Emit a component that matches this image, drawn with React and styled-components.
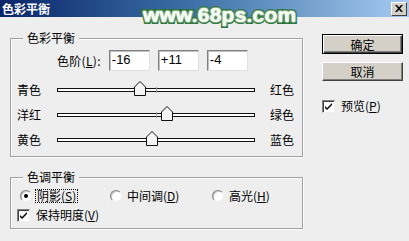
import React from "react";
import styled, { createGlobalStyle } from "styled-components";

const GlobalStyle = createGlobalStyle`
  html, body {
    margin: 0;
    padding: 0;
    background: #eeeeee;
  }
  body {
    font-family: "Noto Sans CJK SC", "Liberation Sans", sans-serif;
    font-size: 12px;
    color: #000;
  }
`;

const Dialog = styled.div`
  position: relative;
  width: 409px;
  height: 241px;
  background: #eeeeee;
  overflow: hidden;
`;

const TitleBar = styled.div`
  height: 17px;
  display: flex;
  align-items: center;
  justify-content: space-between;
  padding: 0 2px 0 2px;
  background: linear-gradient(to right, #0a246a 0%, #3a6ea5 45%, #a6caf0 100%);
`;

const Title = styled.span`
  color: #fff;
  font-weight: bold;
  font-size: 12px;
  line-height: 14px;
`;

const CloseBtn = styled.div`
  width: 14px;
  height: 12px;
  background: #d4d0c8;
  border: 1px solid;
  border-color: #fff #404040 #404040 #fff;
  display: flex;
  align-items: center;
  justify-content: center;
`;

const Watermark = styled.div`
  position: absolute;
  left: 143px;
  top: 3px;
  font-family: "Liberation Sans", Arial, sans-serif;
  font-weight: bold;
  font-size: 21px;
  letter-spacing: 0.2px;
  color: #f4fbef;
  -webkit-text-stroke: 4px #256f35;
  paint-order: stroke fill;
  text-shadow: 0 0 2px #ffffff, 0 0 2px #ffffff;
  pointer-events: none;
`;

const Body = styled.div`
  display: flex;
  align-items: flex-start;
  padding: 0 0 0 10px;
`;

const LeftCol = styled.div`
  width: 293px;
  flex-shrink: 0;
  display: flex;
  flex-direction: column;
  gap: 20px;
  padding-top: 21px;
`;

const RightCol = styled.div`
  margin-left: 19px;
  padding-top: 17px;
  width: 81px;
  display: flex;
  flex-direction: column;
`;

const Group = styled.div`
  position: relative;
  box-sizing: border-box;
  height: ${(p) => p.$h}px;
  border: 1px solid #a0a0a0;
  box-shadow: inset 1px 1px 0 #fff, 1px 1px 0 #fff;
  padding: ${(p) => p.$pad};
  display: flex;
  flex-direction: column;
`;

const Legend = styled.span`
  position: absolute;
  left: 12px;
  top: -7px;
  padding: 0 4px;
  background: #eeeeee;
  line-height: 12px;
`;

const LevelRow = styled.div`
  display: flex;
  align-items: center;
  height: 20px;
  margin-left: 46px;
  margin-bottom: 10px;
`;

const LevelLabel = styled.span`
  margin-right: 8px;
  letter-spacing: 0.3px;
`;

const Field = styled.div`
  box-sizing: border-box;
  width: 41px;
  height: 21px;
  margin-right: 8px;
  background: #fff;
  border: 1px solid;
  border-color: #808080 #e0e0e0 #e0e0e0 #808080;
  box-shadow: inset 1px 1px 0 #c0c0c0;
  font-family: "Liberation Sans", Arial, sans-serif;
  font-size: 13px;
  line-height: 18px;
  padding-left: 2px;
`;

const SliderRow = styled.div`
  display: flex;
  align-items: center;
  height: 20px;
  margin-bottom: 5px;
  padding-left: 6px;
`;

const SideLabel = styled.span`
  width: ${(p) => p.$w}px;
  flex-shrink: 0;
  line-height: 12px;
`;

const Track = styled.div`
  position: relative;
  flex-shrink: 0;
  width: 196px;
  height: 2px;
  background: #fff;
  border: 1px solid #111;
  margin-right: 15px;
`;

const Tick = styled.div`
  position: absolute;
  left: 98px;
  top: -2px;
  width: 1px;
  height: 6px;
  background: #9a9a9a;
`;

const Thumb = styled.svg`
  position: absolute;
  top: -8px;
  margin-left: -6px;
`;

const OptionRow = styled.div`
  display: flex;
  align-items: center;
  height: 14px;
`;

const Option = styled.label`
  display: flex;
  align-items: center;
  width: ${(p) => p.$w}px;
  flex-shrink: 0;
`;

const Radio = styled.span`
  box-sizing: border-box;
  width: 12px;
  height: 12px;
  border-radius: 50%;
  background: #fff;
  border: 1px solid;
  border-color: #808080 #f0f0f0 #f0f0f0 #808080;
  box-shadow: inset 1px 1px 0 #c8c8c8;
  display: flex;
  align-items: center;
  justify-content: center;
  margin-right: 4px;
  flex-shrink: 0;

  &::after {
    content: "";
    width: 4px;
    height: 4px;
    border-radius: 50%;
    background: ${(p) => (p.$on ? "#000" : "transparent")};
  }
`;

const OptionText = styled.span`
  line-height: 12px;
  padding: 0 1px;
  outline: ${(p) => (p.$focus ? "1px dotted #000" : "none")};
  outline-offset: 0px;
`;

const Box = styled.span`
  box-sizing: border-box;
  width: 13px;
  height: 13px;
  background: #fff;
  border: 1px solid;
  border-color: #808080 #f0f0f0 #f0f0f0 #808080;
  box-shadow: inset 1px 1px 0 #404040;
  display: flex;
  align-items: center;
  justify-content: center;
  margin-right: 5px;
  flex-shrink: 0;
`;

const Key = styled.u`
  text-decoration: underline;
  text-underline-offset: 1px;
`;

const Button = styled.div`
  box-sizing: border-box;
  width: 81px;
  height: ${(p) => (p.$default ? 20 : 19)}px;
  margin-bottom: ${(p) => p.$mb}px;
  background: #d4d0c8;
  border: 1px solid;
  border-color: ${(p) => (p.$default ? "#000" : "#fff #404040 #404040 #fff")};
  box-shadow: ${(p) =>
    p.$default
      ? "inset 1px 1px 0 #fff, inset -1px -1px 0 #404040, inset -2px -2px 0 #808080"
      : "inset -1px -1px 0 #808080"};
  display: flex;
  align-items: center;
  justify-content: center;
  font-size: 12px;
`;

const CheckRow = styled.label`
  display: flex;
  align-items: center;
  height: 14px;
  margin: ${(p) => p.$m || "0"};
`;

const Check = () => (
  <Box>
    <svg width="9" height="9" viewBox="0 0 9 9">
      <path d="M1 4 L3 6 L8 1 L8 3 L3 8 L1 6 Z" fill="#000" />
    </svg>
  </Box>
);

const sliders = [
  { left: "青色", right: "红色", value: -16 },
  { left: "洋红", right: "绿色", value: 11 },
  { left: "黄色", right: "蓝色", value: -4 },
];

const TRACK = 196;

const App = () => {
  return (
    <Dialog>
      <GlobalStyle />
      <TitleBar>
        <Title>色彩平衡</Title>
        <CloseBtn>
          <svg width="8" height="7" viewBox="0 0 8 7">
            <path d="M0 0 L2 0 L4 2.3 L6 0 L8 0 L5 3.5 L8 7 L6 7 L4 4.7 L2 7 L0 7 L3 3.5 Z" fill="#000" />
          </svg>
        </CloseBtn>
      </TitleBar>

      <Body>
        <LeftCol>
          <Group $h={119} $pad="11px 0 0 0">
            <Legend>色彩平衡</Legend>
            <LevelRow>
              <LevelLabel>
                色阶(<Key>L</Key>):
              </LevelLabel>
              <Field>-16</Field>
              <Field>+11</Field>
              <Field>-4</Field>
            </LevelRow>
            {sliders.map((s) => (
              <SliderRow key={s.left}>
                <SideLabel $w={40}>{s.left}</SideLabel>
                <Track>
                  <Tick />
                  <Thumb
                    width="12"
                    height="15"
                    viewBox="0 0 12 15"
                    style={{ left: `${TRACK / 2 + (s.value / 100) * (TRACK / 2)}px` }}
                  >
                    <path d="M0.5 14.5 L0.5 6 L6 0.5 L11.5 6 L11.5 14.5 Z" fill="#f4f4f4" stroke="#111" />
                  </Thumb>
                </Track>
                <SideLabel $w={26}>{s.right}</SideLabel>
              </SliderRow>
            ))}
          </Group>

          <Group $h={52} $pad="11px 0 0 9px">
            <Legend>色调平衡</Legend>
            <OptionRow>
              <Option $w={90}>
                <Radio $on />
                <OptionText $focus>
                  阴影(<Key>S</Key>)
                </OptionText>
              </Option>
              <Option $w={102}>
                <Radio />
                <OptionText>
                  中间调(<Key>D</Key>)
                </OptionText>
              </Option>
              <Option $w={80}>
                <Radio />
                <OptionText>
                  高光(<Key>H</Key>)
                </OptionText>
              </Option>
            </OptionRow>
            <CheckRow $m="5px 0 0 -3px">
              <Check />
              <OptionText>
                保持明度(<Key>V</Key>)
              </OptionText>
            </CheckRow>
          </Group>
        </LeftCol>

        <RightCol>
          <Button $default $mb={8}>确定</Button>
          <Button $mb={18}>取消</Button>
          <CheckRow>
            <Check />
            <OptionText>
              预览(<Key>P</Key>)
            </OptionText>
          </CheckRow>
        </RightCol>
      </Body>

      <Watermark>www.68ps.com</Watermark>
    </Dialog>
  );
};

export default App;
